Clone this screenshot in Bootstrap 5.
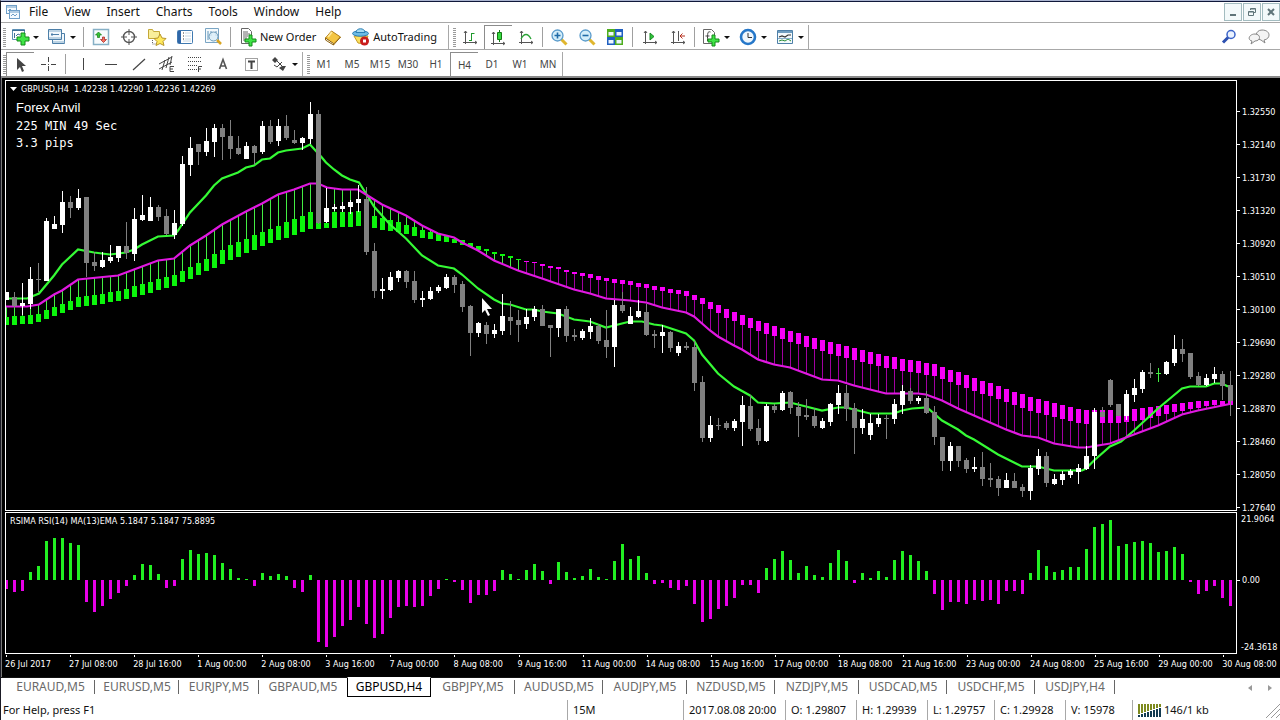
<!DOCTYPE html>
<html lang="en">
<head>
<meta charset="utf-8">
<meta name="viewport" content="width=device-width, initial-scale=1">
<title>GBPUSD,H4</title>
<link href="https://cdn.jsdelivr.net/npm/bootstrap@5.3.0/dist/css/bootstrap.min.css" rel="stylesheet">
<style>
  body { font-family: "Noto Sans", "Open Sans", sans-serif; font-size: 12px; line-height: 16px; color: #111; background: #fff; }
  button { font: inherit; color: inherit; background: none; border: 0; padding: 0; }
  .shell { border-left: 1px solid #1a1a24; border-top: 1px solid #aab4d0; }
  .menubar { height: 22px; border-top: 1px solid #10183a; border-bottom: 1px solid #a8a8a8; }
  .menubar .menu-item { color: #111; padding: 0 8px; text-decoration: none; }
  .winbtns { gap: 1px; }
  .winbtn { width: 18px; height: 18px; border: 1px solid #a3bcc0; background: #f3f9fa; display: grid; place-items: center; }
  .bar { border-bottom: 1px solid #a8a8a8; padding-top: 2px; }
  .bar-a { height: 27px; }
  .bar-b { height: 28px; border-bottom: 2px solid #8a8a8a; }
  .group { border-right: 1px solid #a8a8a8; height: 100%; display: flex; align-items: center; }
  .grip { width: 3px; height: 19px; margin-left: 2px; background: repeating-linear-gradient(#9a9a9a 0 1px, #fff 1px 2px); }
  .tool { width: 28px; height: 24px; display: flex; align-items: center; justify-content: center; }
  .tool-drop { width: 37px; padding: 0 4px; justify-content: space-between; }
  .tool-text { width: auto; padding: 0 3px 0 4px; gap: 2px; font-size: 11px; }
  .tool.on { border-left: 1px solid #8c8c8c; border-top: 1px solid #8c8c8c; }
  .tool svg, .winbtn svg { display: block; }
  .rule { width: 1px; height: 20px; margin: 0 3px; background: #a0a0a0; }
  .rule-tight { margin: 0 2px; }
  .caret { border: 3px solid transparent; border-top-color: #111; border-bottom: 0; }
  .tool.period { font-size: 10px; color: #444; }
  .deck { background: #000; color: #fff; border-left: 1px solid #777; padding: 2px 0 0 3px; font-family: "DejaVu Sans Condensed", "DejaVu Sans", sans-serif; font-size: 9px; line-height: 14px; white-space: nowrap; }
  .deck-grid { display: grid; grid-template-columns: minmax(0, 1fr) 43px; grid-template-rows: minmax(0, 431fr) minmax(0, 142fr) 22px; row-gap: 1px; }
  .pane { border: 1px solid #fff; position: relative; min-height: 0; }
  .plot { position: absolute; inset: 0; width: 100%; height: 100%; display: block; }
  .pane-text { position: absolute; left: 4px; top: 1px; }
  .note { position: absolute; left: 10px; top: 17px; }
  .note-name { font: 13px/20px "Liberation Sans", sans-serif; }
  .note-line { font: 12px/17px "DejaVu Sans Mono", monospace; }
  .axis { min-height: 0; }
  .axis > div { display: flex; align-items: center; gap: 2px; }
  .axis > .tick::before { content: ""; width: 3px; height: 1px; background: #fff; }
  .axis-price > div { flex: 0 0 7.657%; }
  .axis-price > div:first-child { margin-top: 15px; }
  .axis-ind > div:first-child { flex: 0 0 43%; align-items: flex-start; }
  .times { display: flex; }
  .times > div { flex: 0 0 5.2%; padding-top: 2px; background: linear-gradient(#fff, #fff) 1px 0 / 1px 2px no-repeat; }
  .tabs { background: #fff; border-top: 1px solid #111; height: 21px; padding-left: 1px; }
  .tabs a { color: #6a6a6a; text-decoration: none; text-align: center; position: relative; height: 19px; line-height: 18px; }
  .tabs a::after { content: ""; position: absolute; right: 0; top: 2px; bottom: 3px; width: 1px; background: #666; }
  .t-first { width: 93px; padding-left: 4px; }
  .t-s { width: 80px; } .t-m { width: 84px; } .t-l { width: 88px; }
  .tabs a.active { color: #000; border: 1px solid #000; border-top-color: #fff; margin-top: -1px; height: 20px; }
  .tabs a.active::after, .tabs a.before-active::after { display: none; }
  .status { height: 22px; font-size: 11px; }
  .status > div { border-left: 1px solid #a8a8a8; padding-left: 5px; height: 20px; line-height: 20px; }
  .status > .help { border: 0; padding-left: 2px; }
  .c-tf { width: 116px; } .c-date { width: 102px; } .c-o { width: 71px; } .c-c { width: 67px; }
  .c-net { width: 148px; gap: 2px; }
</style>
</head>
<body>
<div class="shell d-flex flex-column vh-100 overflow-hidden">

  <nav class="menubar d-flex align-items-center flex-shrink-0">
    <svg class="ms-1" width="16" height="16" viewBox="0 0 16 16" fill="#f4faff" stroke="#6f9fc8"><rect x="1.500" y="1.500" width="10" height="8"/><path d="M1.500 3h10M3 7l2-2 2 2" fill="none"/><rect x="4.500" y="6.500" width="10" height="8"/><path d="M4.500 8h10M6 12l2-2 2 2 2-2" fill="none"/></svg>
    <a class="menu-item" href="#">File</a><a class="menu-item" href="#">View</a><a class="menu-item" href="#">Insert</a><a class="menu-item" href="#">Charts</a><a class="menu-item" href="#">Tools</a><a class="menu-item" href="#">Window</a><a class="menu-item" href="#">Help</a>
    <div class="winbtns ms-auto d-flex">
      <button class="winbtn" aria-label="Minimize"><svg width="10" height="10"><path d="M2 8h6" stroke="#5f7479" stroke-width="2"/></svg></button>
      <button class="winbtn" aria-label="Restore"><svg width="10" height="10" fill="none" stroke="#5f7479"><path d="M3.500 3V1.500h5v4H7M3.500 2h5"/><path d="M1.500 4.500h5v4h-5zM1.500 5h5"/></svg></button>
      <button class="winbtn" aria-label="Close"><svg width="10" height="10"><path d="M2 2l6 6M8 2l-6 6" stroke="#5f7479" stroke-width="2"/></svg></button>
    </div>
  </nav>

  <div class="bar bar-a d-flex align-items-center flex-shrink-0">
    <div class="group">
      <div class="grip"></div>
      <button class="tool tool-drop" aria-label="New chart"><svg width="20" height="20" viewBox="0 0 20 20"><path d="M2.500 2.500h12v10h-12z" fill="#fff" stroke="#5c8fb5"/><path d="M2 3.500h13M4.500 6v5M6 9l2-2 2 1" fill="none" stroke="#3f6f95"/><path d="M11 6h4v4h4v4h-4v4h-4v-4H7v-4h4z" fill="#3fe446" stroke="#128a18"/></svg><span class="caret"></span></button>
      <button class="tool tool-drop" aria-label="Profiles"><svg width="20" height="20" viewBox="0 0 20 20" fill="#f2f8fc" stroke="#4d7fa8"><path d="M5.500 6.500h12v10h-12z"/><path d="M6 15h12" stroke="#86aecb"/><path d="M1.500 2.500h13v10h-13z"/><path d="M2 4h12M2 11h12" stroke="#86aecb"/><path d="M4 7.500h8M5 6v3" fill="none"/></svg><span class="caret"></span></button>
      <div class="rule"></div>
      <button class="tool" aria-label="Market watch"><svg width="18" height="18" viewBox="0 0 18 18"><rect x="1.500" y="1.500" width="15" height="15" fill="#f7fbfd" stroke="#86b0c6" stroke-width="1.500"/><path d="M6.500 4l3 3h-2v2.500h-2V7h-2z" fill="#35c435" stroke="#147a14" stroke-width=".7"/><path d="M11.500 14.500l-3-3h2V9h2v2.500h2z" fill="#f5705e" stroke="#a02020" stroke-width=".7"/></svg></button>
      <button class="tool" aria-label="Data window"><svg width="18" height="18" viewBox="0 0 18 18" fill="none" stroke="#555"><circle cx="9" cy="9" r="5.500" stroke-width="1.400"/><path d="M9 1v6M9 11v6M1 9h6M11 9h6"/></svg></button>
      <button class="tool" aria-label="Navigator"><svg width="20" height="20" viewBox="0 0 20 20"><path d="M1.500 2.500h4l1 2h6v7h-11z" fill="#f9ee9a" stroke="#c4a838"/><path d="M5.500 13v4h4" fill="none" stroke="#666" stroke-dasharray="1 1"/><path d="M13 7l2 4 4 .5-3 3 1 4-4-2-4 2 1-4-3-3 4-.5z" fill="#ffe95c" stroke="#b8962a"/></svg></button>
      <button class="tool" aria-label="Terminal"><svg width="18" height="18" viewBox="0 0 18 18"><rect x="1.500" y="2.500" width="15" height="13" rx="1" fill="#fff" stroke="#3f79b0"/><path d="M2 3h3v12H2z" fill="#2f66a8"/><path d="M7 5h1M7 8h1M7 11h1" stroke="#333"/><path d="M9 5h6M9 8h6M9 11h6M7 13h8" stroke="#c8d8e4"/></svg></button>
      <button class="tool" aria-label="Strategy tester"><svg width="20" height="20" viewBox="0 0 20 20"><path d="M2.500 1.500h13v14h-13z" fill="#f5fafc" stroke="#7aa5c4"/><path d="M5 4v9M8 4v5M13 4v5" stroke="#5f94bb"/><circle cx="10.500" cy="9.500" r="4.500" fill="#d9edf7" fill-opacity=".8" stroke="#6d9bb9"/><path d="M14 13l4 4" stroke="#d9a521" stroke-width="2.500"/></svg></button>
      <div class="rule"></div>
      <button class="tool tool-text"><svg width="20" height="20" viewBox="0 0 20 20"><path d="M3.500 1.500h7l3 3v12h-10z" fill="#fff" stroke="#666"/><path d="M5 5h5M5 7h7M5 9h5M5 11h4M5 13h3" stroke="#666"/><path d="M11 8h3v4h4v3h-4v4h-3v-4H7v-3h4z" fill="#3fe446" stroke="#128a18"/></svg>New Order</button>
      <button class="tool" aria-label="MetaEditor"><svg width="18" height="18" viewBox="0 0 18 18"><path d="M1.500 10l6-7 9 6-7 7z" fill="#f4c542" stroke="#b07c13"/><path d="M1.500 10l8 5.500v1.500l-8-5zM9.500 17l7-8" fill="#fff" stroke="#8f6410"/><path d="M4 9l4-5" stroke="#ffe89a" stroke-width="2"/></svg></button>
      <button class="tool tool-text"><svg width="20" height="20" viewBox="0 0 20 20"><path d="M3 9l4 7 7 1 3-8z" fill="#fbe05e" stroke="#c59a25"/><ellipse cx="9.500" cy="6.500" rx="8" ry="2.700" fill="#6dbce5" stroke="#2c7fb4"/><path d="M5 5.500c0-5 9-5 9 0z" fill="#a5daf2" stroke="#2c7fb4"/><circle cx="13.500" cy="14" r="4.500" fill="#c91d1d"/><path d="M12 12.500h3v3h-3z" fill="#fff"/></svg>AutoTrading</button>
      <span class="ps-2"></span>
    </div>
    <div class="group">
      <div class="grip ms-1"></div>
      <button class="tool" aria-label="Bar chart"><svg width="18" height="18" viewBox="0 0 18 18" fill="none" stroke="#555"><path d="M4.500 3v13M2 14.500h14M3 5l1.500-2L6 5M14 13l2 1.500-2 1.500"/><path d="M10.500 5v8M8 12.500h2M11 5.500h2.500" stroke="#1e9a2b"/></svg></button>
      <button class="tool on" aria-label="Candlesticks"><svg width="18" height="18" viewBox="0 0 18 18" fill="none" stroke="#555"><path d="M4.500 3v13M2 14.500h14M3 5l1.500-2L6 5M14 13l2 1.500-2 1.500"/><path d="M10.500 1v12" stroke="#147a14"/><path d="M8.500 3.500h4v7h-4z" fill="#35d940" stroke="#147a14"/></svg></button>
      <button class="tool" aria-label="Line chart"><svg width="18" height="18" viewBox="0 0 18 18" fill="none" stroke="#555"><path d="M4.500 3v13M2 14.500h14M3 5l1.500-2L6 5M14 13l2 1.500-2 1.500"/><path d="M4 11c3-6 7-6 10 0" stroke="#2aa336" stroke-width="1.300"/></svg></button>
      <div class="rule rule-tight"></div>
      <button class="tool" aria-label="Zoom in"><svg width="18" height="18" viewBox="0 0 18 18"><path d="M11 11l5.500 5.500" stroke="#e0b62e" stroke-width="3"/><circle cx="7.500" cy="7.500" r="5.500" fill="#d3eefa" stroke="#5a9bcb" stroke-width="1.300"/><path d="M4.500 7.500h6M7.500 4.500v6" stroke="#1f6ba8" stroke-width="1.600"/></svg></button>
      <button class="tool" aria-label="Zoom out"><svg width="18" height="18" viewBox="0 0 18 18"><path d="M11 11l5.500 5.500" stroke="#e0b62e" stroke-width="3"/><circle cx="7.500" cy="7.500" r="5.500" fill="#d3eefa" stroke="#5a9bcb" stroke-width="1.300"/><path d="M4.500 7.500h6" stroke="#1f6ba8" stroke-width="1.600"/></svg></button>
      <button class="tool" aria-label="Tile windows"><svg width="18" height="18" viewBox="0 0 18 18"><path d="M1 1h8v8H1zM9 9h8v8H9z" fill="#4fae1e"/><path d="M9 1h8v8H9zM1 9h8v8H1z" fill="#1f5fc0"/><path d="M2.500 4h5v3.500h-5zM10.500 4h5v3.500h-5zM2.500 12h5v3.500h-5zM10.500 12h5v3.500h-5z" fill="#eef6ff"/></svg></button>
      <div class="rule"></div>
      <button class="tool" aria-label="Auto scroll"><svg width="18" height="18" viewBox="0 0 18 18" fill="none" stroke="#555"><path d="M4.500 3v13M2 14.500h14M3 5l1.500-2L6 5M14 13l2 1.500-2 1.500"/><path d="M9 5l4 3.500L9 12z" fill="#2fc53a" stroke="#1a8a24"/></svg></button>
      <button class="tool" aria-label="Chart shift"><svg width="18" height="18" viewBox="0 0 18 18" fill="none" stroke="#555"><path d="M4.500 3v13M2 14.500h14M3 5l1.500-2L6 5M14 13l2 1.500-2 1.500M9.500 3v10"/><path d="M16 8h-4M13.500 5.500L11 8l2.500 2.500" stroke="#b5301e"/></svg></button>
      <div class="rule rule-tight"></div>
      <button class="tool tool-drop" aria-label="Indicators"><svg width="20" height="20" viewBox="0 0 20 20"><path d="M2.500 2.500h8l3 3v11h-11z" fill="#fff" stroke="#666"/><path d="M9.500 5c-3-1-3 1-3 9M4.500 9h4" fill="none" stroke="#444"/><path d="M11 8h3v4h4v3h-4v4h-3v-4H7v-3h4z" fill="#3fe446" stroke="#128a18"/></svg><span class="caret"></span></button>
      <button class="tool tool-drop" aria-label="Periods"><svg width="20" height="20" viewBox="0 0 20 20"><circle cx="10" cy="10" r="7" fill="#eef6fd" stroke="#2577c9" stroke-width="2.600"/><path d="M10 6v4.500h4" fill="none" stroke="#333"/></svg><span class="caret"></span></button>
      <button class="tool tool-drop" aria-label="Templates"><svg width="20" height="20" viewBox="0 0 20 20"><path d="M2.500 3.500h15v13h-15z" fill="#f3f9fc" stroke="#4d7fa8"/><path d="M3 5h14" stroke="#6f9dc0" stroke-width="2"/><path d="M4 10l3-1 3 1 3-2h3" fill="none" stroke="#333" stroke-width="1.200"/><path d="M4 14l3-1 3 1 3-2 3 2" fill="none" stroke="#2c8f3a"/><path d="M3 11.500h14" stroke="#86aecb"/></svg><span class="caret"></span></button>
    </div>
    <div class="ms-auto d-flex">
      <button class="tool" aria-label="Search"><svg width="16" height="16" viewBox="0 0 16 16"><circle cx="10" cy="5.500" r="4" fill="#eaf2ff" stroke="#3a63c8" stroke-width="1.500"/><path d="M7 8.500l-5 5" stroke="#2c50b0" stroke-width="3"/></svg></button>
      <button class="tool tool-drop" aria-label="Chat"><svg width="24" height="18" viewBox="0 0 24 18" fill="#f4f4f4" stroke="#888"><path d="M17 12l1 3-4-3c-7-1-6-10 1-10 9 0 9 9 2 10z"/><path d="M5 13l-1 3 4-3c6 0 6-7 0-7s-8 6-3 7z"/></svg></button>
    </div>
  </div>

  <div class="bar bar-b d-flex align-items-center flex-shrink-0">
    <div class="group">
      <div class="grip"></div>
      <button class="tool on" aria-label="Cursor"><svg width="16" height="16" viewBox="0 0 16 16"><path d="M4 1v12l3-3 2 5 2-1-2-5h4z" fill="#444"/></svg></button>
      <button class="tool" aria-label="Crosshair"><svg width="16" height="16" fill="none" stroke="#444"><path d="M8.500 1v5M8.500 10v5M1 8.500h5M11 8.500h5M8 8.500h1"/></svg></button>
      <div class="rule"></div>
      <button class="tool" aria-label="Vertical line"><svg width="16" height="16"><path d="M8.500 2v12" stroke="#444"/></svg></button>
      <button class="tool" aria-label="Horizontal line"><svg width="16" height="16"><path d="M2 8.500h12" stroke="#444"/></svg></button>
      <button class="tool" aria-label="Trendline"><svg width="16" height="16"><path d="M2 14L14 3" stroke="#444" stroke-width="1.200"/></svg></button>
      <button class="tool" aria-label="Equidistant channel"><svg width="18" height="18" viewBox="0 0 18 18" fill="none" stroke="#444"><path d="M1 9l13-7M1 14l13-7M4 15l3-10M8 13l3-11M12 10l2-9"/><path d="M16 11.500h-4v5h4M12 14h3"/></svg></button>
      <button class="tool" aria-label="Fibonacci"><svg width="18" height="18" viewBox="0 0 18 18" fill="none" stroke="#444"><path d="M2 2.500h14M2 6.500h14M2 10.500h9M2 14.500h9" stroke-dasharray="1 1"/><path d="M16 11.500h-3.500V17M12 14h3"/></svg></button>
      <button class="tool" aria-label="Text"><svg width="16" height="16" fill="none" stroke="#555" stroke-width="1.600"><path d="M4.500 13L8 3.500 11.500 13M5.500 10h5"/></svg></button>
      <button class="tool" aria-label="Text label"><svg width="16" height="16" viewBox="0 0 16 16" fill="none" stroke="#444"><path d="M2.500 2.500h12v12h-12z" stroke-dasharray="1 1"/><path d="M5 5.500h7M8.500 5v8" stroke-width="2"/></svg></button>
      <button class="tool tool-drop" aria-label="Arrows"><svg width="20" height="20" viewBox="0 0 20 20"><path d="M3 6l3-3 3 3-3 3zM10 14l3-2h4l-3 5z" fill="#444"/><path d="M5 11l3 2 5-5M8 7l6 6" fill="none" stroke="#444"/></svg><span class="caret"></span></button>
    </div>
    <div class="group">
      <div class="grip ms-1"></div>
      <button class="tool period">M1</button><button class="tool period">M5</button><button class="tool period">M15</button><button class="tool period">M30</button><button class="tool period">H1</button><button class="tool period on">H4</button><button class="tool period">D1</button><button class="tool period">W1</button><button class="tool period">MN</button>
    </div>
  </div>

  <main class="deck flex-grow-1 d-flex flex-column">
    <div class="deck-grid flex-grow-1">
      <section class="pane">
        <svg class="plot" id="price" viewBox="6 81 1230 429" preserveAspectRatio="none"></svg>
        <div class="pane-text d-flex align-items-center gap-1"><svg width="7" height="4" viewBox="0 0 7 4"><path d="M0 0h7L3.500 4z" fill="#fff"/></svg><span>GBPUSD,H4&nbsp; 1.42238 1.42290 1.42236 1.42269</span></div>
        <div class="note"><div class="note-name">Forex Anvil</div><div class="note-line">225 MIN 49 Sec</div><div class="note-line">3.3 pips</div></div>
      </section>
      <div class="axis axis-price d-flex flex-column">
        <div class="tick">1.32550</div><div class="tick">1.32140</div><div class="tick">1.31730</div><div class="tick">1.31320</div><div class="tick">1.30920</div><div class="tick">1.30510</div><div class="tick">1.30100</div><div class="tick">1.29690</div><div class="tick">1.29280</div><div class="tick">1.28870</div><div class="tick">1.28460</div><div class="tick">1.28050</div><div class="tick">1.27640</div>
      </div>
      <section class="pane">
        <svg class="plot" id="hist" viewBox="6 513 1230 141" preserveAspectRatio="none"></svg>
        <div class="pane-text">RSIMA RSI(14) MA(13)EMA 5.1847 5.1847 75.8895</div>
      </section>
      <div class="axis axis-ind d-flex flex-column">
        <div class="ps-1">21.9064</div><div class="tick">0.00</div><div class="mt-auto ps-1">-24.3618</div>
      </div>
      <div class="times" id="times"></div>
    </div>
  </main>

  <nav class="tabs d-flex flex-shrink-0">
    <a class="t-first" href="#">EURAUD,M5</a><a class="t-m" href="#">EURUSD,M5</a><a class="t-s" href="#">EURJPY,M5</a><a class="t-l before-active" href="#">GBPAUD,M5</a><a class="t-m active" href="#">GBPUSD,H4</a><a class="t-m" href="#">GBPJPY,M5</a><a class="t-l" href="#">AUDUSD,M5</a><a class="t-m" href="#">AUDJPY,M5</a><a class="t-l" href="#">NZDUSD,M5</a><a class="t-m" href="#">NZDJPY,M5</a><a class="t-l" href="#">USDCAD,M5</a><a class="t-l" href="#">USDCHF,M5</a><a class="t-s" href="#">USDJPY,H4</a>
    <div class="ms-auto d-flex align-items-center pe-2 gap-3">
      <button aria-label="Scroll left"><svg class="d-block" width="4" height="6"><path d="M4 0v6L0 3z" fill="#999"/></svg></button>
      <button aria-label="Scroll right"><svg class="d-block" width="4" height="6"><path d="M0 0v6l4-3z" fill="#999"/></svg></button>
    </div>
  </nav>

  <footer class="status d-flex align-items-end flex-shrink-0">
    <div class="help flex-grow-1">For Help, press F1</div>
    <div class="c-tf">15M</div><div class="c-date">2017.08.08 20:00</div><div class="c-o">O: 1.29807</div><div class="c-o">H: 1.29939</div><div class="c-c">L: 1.29757</div><div class="c-o">C: 1.29928</div><div class="c-c">V: 15978</div>
    <div class="c-net d-flex align-items-center"><svg id="net" width="24" height="14"></svg><span class="flex-grow-1">146/1 kb</span><svg width="14" height="16" stroke="#999"><path d="M0 16L14 2M5 16l9-9M10 16l4-4"/></svg></div>
  </footer>
</div>

<script src="https://cdn.jsdelivr.net/npm/bootstrap@5.3.0/dist/js/bootstrap.bundle.min.js"></script>
<script>
  const STEP = 8, X0 = 6;
  const WHITE = '#fff', GRAY = '#808080', GREEN = '#0bf50b', LIME = '#44ee44', PINK = '#f800f8';
  const rect = (x, y, w, h, c) => `<rect x="${x}" y="${y}" width="${w}" height="${h}" fill="${c}"/>`;

  // One entry per bar: colour (w up, g down, l doji), high, body top, body bottom, low
  const candles = `w292,292,300,300 g292,297,306,308 w283,303,306,315 w267,279,304,309 g263,279,280,292 w218,221,281,281 w216,224,229,229 w191,202,225,233 g196,202,208,218 w189,198,208,210
g197,197,263,277 g252,262,266,271 w252,260,267,268 w245,257,261,263 w246,246,258,262 g222,246,253,259 w208,219,254,261 w195,215,220,221 w197,207,221,221 g205,207,217,221
g209,216,234,235 w210,223,235,239 w156,164,224,226 w137,148,165,176 g144,144,152,165 w128,141,152,156 w124,128,142,157 g124,128,137,160 g120,136,149,159 g136,148,154,155
w142,146,159,159 g145,146,153,165 w121,126,152,154 g120,126,142,144 w119,126,141,146 g115,126,138,140 g130,140,143,144 w137,138,143,150 w102,114,139,144 g110,114,223,224
w188,208,222,223 w204,207,209,211 w202,206,209,212 w200,202,207,214 w185,199,203,212 g187,199,252,255 g243,251,291,298 w278,289,291,299 w272,277,290,291 w270,271,278,282
g270,271,282,288 g271,281,300,303 w291,298,300,307 w287,291,299,300 w285,287,291,293 w274,277,288,289 g275,277,285,293 g281,284,307,312 g305,306,333,356 w322,323,333,337
g322,325,334,344 w324,330,334,338 w294,316,331,335 g301,317,321,335 g310,320,325,342 w309,317,324,329 w306,309,317,321 g305,309,326,326 g325,325,328,357 w309,309,328,337
g306,309,336,342 g329,335,337,341 w329,331,338,340 w318,326,332,339 g324,326,341,344 g310,340,347,358 w300,305,347,367 g292,305,311,313 w307,316,324,324 w300,311,317,318
g304,312,335,336 g330,334,336,348 w325,332,336,353 g331,332,348,352 w342,346,353,356 g342,346,348,350 g341,347,383,391 g376,382,438,442 w416,425,438,442 g418,425,426,430
g421,423,428,430 w419,421,428,431 w396,405,422,446 g395,406,429,431 g419,428,441,445 w404,406,441,442 g404,406,410,413 w391,393,410,411 g391,392,408,414 g402,407,416,437
g399,415,417,420 g408,416,426,428 w418,421,428,429 w403,404,422,426 w385,393,405,414 g385,393,409,421 g403,408,428,454 w409,419,428,434 w414,423,435,440 w414,418,424,427
g415,418,419,439 w399,404,419,424 w385,391,405,414 g388,391,401,404 w396,398,401,404 g391,398,413,414 g406,412,437,445 g437,437,461,471 w442,446,461,471 g446,446,461,467
g458,460,469,473 w457,467,469,472 g452,467,479,486 g463,478,480,487 g476,479,488,496 w473,480,488,488 g473,481,488,488 g484,487,491,497 w465,468,491,500 w449,456,469,475
g452,456,483,487 w474,479,484,485 w471,474,480,485 w469,471,475,478 w464,468,472,484 w446,456,469,470 w408,412,456,469 g407,412,417,417 g379,380,405,407 g404,404,416,416
w390,394,416,420 w379,388,395,402 w370,372,389,393 g363,372,374,378 l368,373,374,382 w361,362,374,375 w335,349,363,366 g339,349,354,362 g353,353,377,379 g372,376,385,386
w374,378,385,386 w367,374,379,383 g371,374,386,400 g371,385,401,416`.split(/\s+/).map(s => [s[0], ...s.slice(1).split(',').map(Number)]);

  const fast = [[6,298],[27,298],[39,293],[54,275],[62,264],[78,249],[94,252],[110,254],[126,252],[134,249],[142,244],[158,236],[174,235],[178,230],[182,224],[190,212],[206,195],[214,185],[222,178],[238,172],[246,167],[254,165],[262,159],[270,158],[278,152],[286,150],[302,148],[310,144],[321,156],[326,162],[334,169],[342,175],[350,179],[359,182],[366,193],[374,206],[390,224],[406,238],[422,255],[438,265],[454,268],[462,274],[478,288],[494,299],[502,303],[510,304],[526,309],[534,309],[542,311],[558,313],[574,319],[590,321],[606,327],[622,323],[630,321],[642,321],[654,324],[662,325],[686,333],[694,340],[702,354],[718,373],[734,386],[750,395],[758,402],[774,403],[790,402],[806,406],[822,410],[838,407],[846,407],[870,413],[894,413],[902,410],[912,408],[927,407],[942,420],[958,429],[966,435],[974,439],[998,454],[1014,462],[1022,466],[1038,466],[1054,470],[1082,470],[1086,468],[1094,460],[1110,446],[1121,441],[1134,430],[1158,408],[1182,388],[1190,386],[1206,386],[1214,383],[1222,383],[1228,386]];
  const slow = [[6,306],[27,306],[39,304],[54,294],[62,290],[78,279],[118,275],[134,269],[158,260],[174,258],[190,245],[206,235],[222,224],[246,211],[262,203],[278,194],[294,189],[310,183],[318,183],[327,187],[342,189],[358,189],[366,194],[382,204],[406,215],[422,225],[438,233],[454,237],[462,242],[478,250],[494,260],[518,270],[542,278],[574,289],[590,293],[606,298],[630,300],[646,302],[662,307],[686,312],[694,316],[710,330],[718,336],[734,345],[742,349],[758,359],[774,364],[790,367],[806,373],[822,379],[838,380],[854,385],[870,389],[886,393],[918,393],[926,394],[942,400],[958,408],[974,415],[990,422],[1006,429],[1022,435],[1038,437],[1054,443],[1078,447],[1086,447],[1110,443],[1126,437],[1142,431],[1158,425],[1182,414],[1198,410],[1232,403]];
  // Ribbon body keyframes: bar index, top, bottom
  const ribbon = [[0,317,325],[3,315,324],[4,314,322],[5,310,319],[7,304,313],[9,297,307],[12,294,304],[15,289,299],[16,286,297],[20,277,288],[21,275,286],[24,263,275],[28,245,260],[32,232,246],[37,216,232],[38,212,229],[39,223,229],[40,223,228],[41,212,228],[42,212,227],[44,211,226],[46,216,228],[47,218,230],[49,222,232],[51,227,236],[53,232,239],[55,236,242],[56,239,243],[57,240,245],[58,243,247],[59,246,250],[60,249,251],[61,252,254],[62,254,256],[63,256,258],[64,259,260],[65,261,262],[66,262,263],[67,264,266],[69,267,269],[71,272,274],[73,274,278],[75,278,281],[77,280,284],[80,284,288],[84,290,294],[85,291,296],[87,298,304],[90,309,318],[93,318,328],[97,328,339],[101,338,349],[105,346,358],[109,354,366],[113,360,372],[116,364,376],[120,375,388],[124,386,399],[128,397,411],[130,401,415],[134,409,423],[135,410,424],[138,410,423],[140,410,422],[142,408,420],[145,405,414],[148,402,409],[151,400,405],[153,401,405]];

  const lerp = (table, at, col) => {
    let i = table.findIndex(p => p[0] >= at);
    if (i < 0) i = table.length - 1;
    if (i === 0) return table[0][col];
    const a = table[i - 1], b = table[i];
    return Math.round(a[col] + (b[col] - a[col]) * Math.min(1, (at - a[0]) / (b[0] - a[0])));
  };
  const line = (pts, c) => `<polyline points="${pts.map(p => p[0] + ',' + (p[1] + 0.5)).join(' ')}" fill="none" stroke="${c}" stroke-width="2.2"/>`;

  let wicks = '', bodies = '', sticks = '';
  candles.forEach((c, k) => {
    const x = X0 + k * STEP, top = lerp(ribbon, k, 1), bot = lerp(ribbon, k, 2), ma = lerp(slow, x, 1);
    const green = k < 65;
    wicks += rect(x, Math.min(top, ma), 1, Math.abs(ma - top), green ? LIME : '#a000a0');
    bodies += rect(x - 2, top, 5, bot - top, green ? GREEN : PINK);
    const col = c[0] === 'w' ? WHITE : c[0] === 'g' ? GRAY : LIME;
    sticks += rect(x, c[1], 1, c[4] - c[1], col) + rect(x - 2, c[2], 5, Math.max(1, c[3] - c[2]), col);
  });
  document.getElementById('price').innerHTML =
    `<g shape-rendering="crispEdges">${wicks}${bodies}</g>` + line(fast, '#35fa35') + line(slow, '#e018e0') +
    `<g shape-rendering="crispEdges">${sticks}</g>` +
    '<path d="M482 298v15l3-3 3 6 2-1-3-6h5z" fill="#fff"/>';

  // Histogram readings, one per bar, in plot units above or below zero
  const hist = [-10,-13,-12,8,14,39,42,42,37,35,-23,-33,-27,-20,-14,-7,5,16,15,6,-9,-7,21,30,26,27,25,17,11,2,1,-7,7,4,6,4,-9,-13,5,-63,-68,-58,-47,-41,-28,-45,-59,-55,-39,-28,-27,-28,-27,-17,-10,1,-2,-11,-24,-16,-16,-12,10,6,1,10,16,9,-5,18,8,2,4,11,3,1,19,36,21,24,7,-5,-4,-9,-11,-7,-25,-43,-40,-30,-27,-19,-6,-6,-14,12,21,29,20,7,14,5,3,17,30,19,-3,7,2,9,3,20,29,25,19,9,-15,-31,-23,-23,-25,-21,-22,-21,-25,-12,-12,-15,7,30,14,8,10,13,13,31,53,56,60,34,36,38,39,37,28,29,33,26,-2,-15,-12,-7,-19,-27];
  document.getElementById('hist').innerHTML = '<g shape-rendering="crispEdges">' +
    hist.map((v, k) => rect(X0 + k * STEP - 1, v > 0 ? 580 - v : 580, 3, Math.abs(v), v > 0 ? '#22f022' : '#e800e8')).join('') + '</g>';

  document.getElementById('times').innerHTML = ['26 Jul 2017','27 Jul 08:00','28 Jul 16:00','1 Aug 00:00','2 Aug 08:00','3 Aug 16:00','7 Aug 00:00','8 Aug 08:00','9 Aug 16:00','11 Aug 00:00','14 Aug 08:00','15 Aug 16:00','17 Aug 00:00','18 Aug 08:00','21 Aug 16:00','23 Aug 00:00','24 Aug 08:00','25 Aug 16:00','29 Aug 00:00','30 Aug 08:00'].map(t => `<div>${t}</div>`).join('');

  let net = '';
  for (let i = 0; i < 8; i++) net += rect(i * 3, 1, 2, 10 - i, '#7d8a1e') + rect(i * 3, 12 - i, 2, 2 + i, '#123a50');
  document.getElementById('net').innerHTML = net;
</script>
</body>
</html>
